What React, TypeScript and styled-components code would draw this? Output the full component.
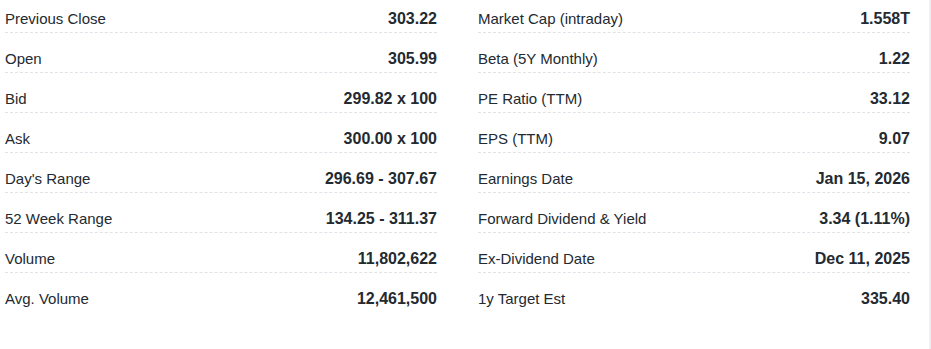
import React from 'react';
import styled, { createGlobalStyle } from 'styled-components';

const GlobalStyle = createGlobalStyle`
  html, body {
    margin: 0;
    padding: 0;
    background: #ffffff;
  }
  body {
    font-family: "Liberation Sans", Arial, sans-serif;
    color: #232a31;
  }
`;

const Page = styled.div`
  width: 929px;
  height: 349px;
  border-right: 2px solid #f0f0f2;
  box-sizing: content-box;
`;

const Grid = styled.div`
  display: grid;
  grid-template-columns: 432px 432px;
  column-gap: 41px;
  padding-left: 5px;
`;

const Column = styled.ul`
  list-style: none;
  margin: 0;
  padding: 0;
`;

const Row = styled.li`
  display: flex;
  justify-content: space-between;
  align-items: baseline;
  padding: 9px 0 3px;
  margin-bottom: 7px;
  border-bottom: 1px dashed #dfe3e8;
  font-size: 15px;
  line-height: 20px;

  &:last-child {
    border-bottom-color: transparent;
  }
`;

const Label = styled.span`
  font-weight: 400;
`;

const Value = styled.span`
  font-weight: 700;
  font-size: 16px;
`;

type Stat = [string, string];

const left: Stat[] = [
  ['Previous Close', '303.22'],
  ['Open', '305.99'],
  ['Bid', '299.82 x 100'],
  ['Ask', '300.00 x 100'],
  ["Day's Range", '296.69 - 307.67'],
  ['52 Week Range', '134.25 - 311.37'],
  ['Volume', '11,802,622'],
  ['Avg. Volume', '12,461,500'],
];

const right: Stat[] = [
  ['Market Cap (intraday)', '1.558T'],
  ['Beta (5Y Monthly)', '1.22'],
  ['PE Ratio (TTM)', '33.12'],
  ['EPS (TTM)', '9.07'],
  ['Earnings Date', 'Jan 15, 2026'],
  ['Forward Dividend & Yield', '3.34 (1.11%)'],
  ['Ex-Dividend Date', 'Dec 11, 2025'],
  ['1y Target Est', '335.40'],
];

const StatList: React.FC<{ items: Stat[] }> = ({ items }) => (
  <Column>
    {items.map(([label, value]) => (
      <Row key={label}>
        <Label>{label}</Label>
        <Value>{value}</Value>
      </Row>
    ))}
  </Column>
);

const App: React.FC = () => (
  <>
    <GlobalStyle />
    <Page>
      <Grid>
        <StatList items={left} />
        <StatList items={right} />
      </Grid>
    </Page>
  </>
);

export default App;
